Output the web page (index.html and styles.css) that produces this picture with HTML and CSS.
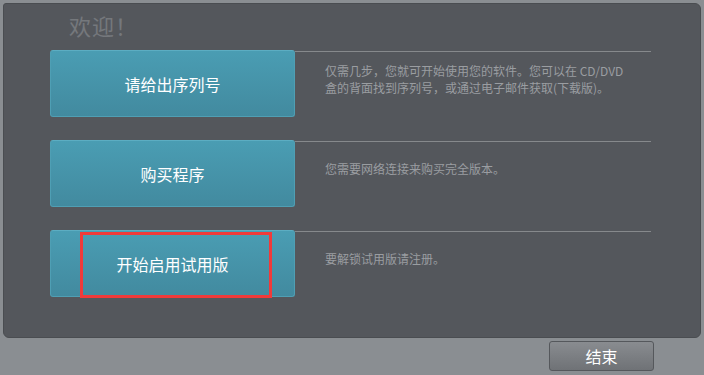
FILE: index.html
```html
<!DOCTYPE html>
<html lang="zh-cn">
<head>
  <meta charset="UTF-8" />
  <title>欢迎</title>
  <link rel="stylesheet" href="styles.css">
</head>
<body>

<div class="window">
  <div class="panel">
    <h1 class="title">欢迎！</h1>

    <div class="row">
      <button class="action">请给出序列号</button>
      <div class="desc desc-first">
        <p>仅需几步，您就可开始使用您的软件。您可以在 CD/DVD</p>
        <p>盒的背面找到序列号，或通过电子邮件获取(下载版)。</p>
      </div>
    </div>

    <div class="row">
      <button class="action">购买程序</button>
      <div class="desc"><p>您需要网络连接来购买完全版本。</p></div>
    </div>

    <div class="row">
      <button class="action">
        开始启用试用版
        <span class="mark"></span>
      </button>
      <div class="desc"><p>要解锁试用版请注册。</p></div>
    </div>
  </div>

  <div class="footer">
    <button class="close">结束</button>
  </div>
</div>

</body>
</html>
```

FILE: styles.css
```css
* {
  margin: 0;
  padding: 0;
  box-sizing: border-box;
  font-family: "Noto Sans CJK SC", "Noto Sans", sans-serif;
}

body {
  background: #8a8e92;
  width: 704px;
  height: 375px;
  overflow: hidden;
}

.window {
  height: 375px;
  display: flex;
  flex-direction: column;
}

.panel {
  margin: 3px 3px 0 3px;
  height: 335px;
  background: #54575c;
  border: 1px solid #4a4d51;
  border-radius: 3px 6px 6px 6px;
  padding-left: 46px;
}

.title {
  font-size: 22px;
  font-weight: normal;
  color: #75787c;
  line-height: 30px;
  padding: 6px 0 0 19px;
  height: 46px;
  letter-spacing: 1px;
}

.row {
  display: flex;
  height: 67px;
  margin-bottom: 23px;
}

.action {
  position: relative;
  width: 245px;
  height: 67px;
  flex: 0 0 245px;
  background: linear-gradient(#4a9db3, #428a9f);
  border: 1px solid #4f9fb4;
  border-top-color: #5cadc2;
  border-radius: 3px;
  color: #fff;
  font-size: 16px;
  cursor: pointer;
}

.mark {
  position: absolute;
  left: 29px;
  top: 1px;
  width: 192px;
  height: 66px;
  border: 3px solid #f03a3a;
}

.desc {
  width: 356px;
  margin-top: 1px;
  border-top: 1px solid #86898c;
  padding: 18px 0 0 30px;
  font-size: 12px;
  line-height: 17px;
  color: #9a9da1;
}

.desc-first {
  padding-top: 10px;
}

.footer {
  flex: 1;
  display: flex;
  justify-content: flex-end;
  align-items: flex-start;
  padding: 3px 50px 0 0;
}

.close {
  width: 105px;
  height: 30px;
  background: linear-gradient(#898c90, #6f7276);
  border: 1px solid #55585c;
  border-radius: 3px;
  color: #fff;
  font-size: 16px;
  cursor: pointer;
}
```
